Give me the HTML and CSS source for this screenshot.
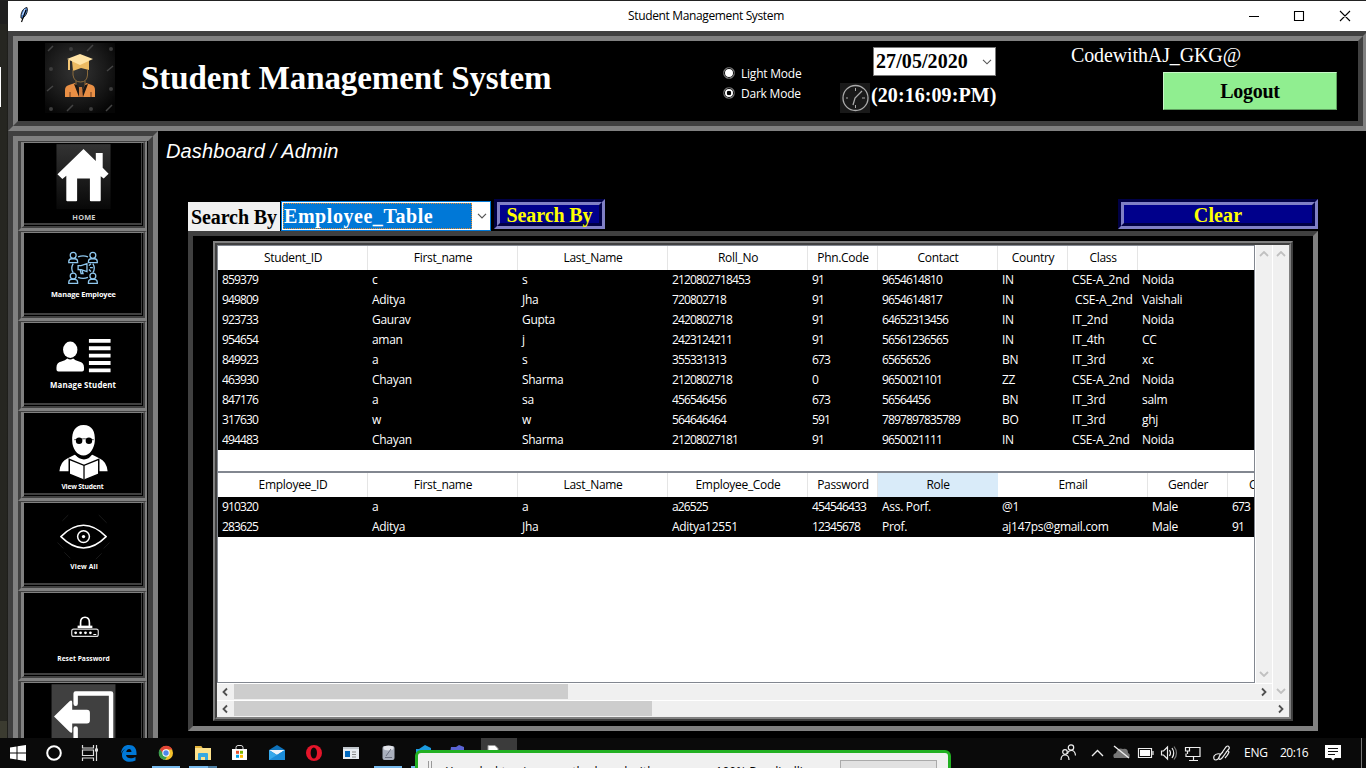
FILE: index.html
```html
<!DOCTYPE html>
<html lang="en">
<head>
<meta charset="utf-8">
<title>Student Management System</title>
<link rel="stylesheet" href="styles.css">
</head>
<body>
<div class="screen">
  <div class="upper">
    <div class="desktop"><i class="chip"></i><i class="patch"></i></div>
    <div class="window">
      <div class="titlebar">
        <svg class="feather" width="12" height="18" viewBox="0 0 12 18"><path d="M2 12C1.500 7 4 2 8 1.500c1 3 0 7.500-4.500 11z" fill="#4a86d8" stroke="#222" stroke-width="1"/><path d="M7 4 2.500 16" stroke="#000" stroke-width="1.200"/><path d="M6 3 3.500 9" stroke="#cfe2ff" stroke-width="1"/></svg>
        <span class="caption">Student Management System</span>
        <svg class="winbtns" width="102" height="12" viewBox="0 0 102 12" fill="none" stroke="#000" stroke-width="1.1"><path d="M0 6.5h10M45.500 1.500h9v9h-9zM91 1l10 10M101 1 91 11"/></svg>
      </div>
      <div class="relief header"><div class="relief-in header-in">
        <svg class="logo" width="70" height="70" viewBox="0 0 70 70"><defs><radialGradient id="lg" cx=".45" cy=".4" r=".7"><stop offset="0" stop-color="#343434"/><stop offset=".6" stop-color="#191919"/><stop offset="1" stop-color="#050505"/></radialGradient></defs><rect width="70" height="70" fill="url(#lg)"/><g stroke="#444" stroke-width="1.500"><path d="m3 8 5-5M42 8l6-6M62 28l6-5M2 48l6-5M22 68l6-6M61 68l6-6"/></g><g fill="#3c3c3c"><circle cx="26" cy="6" r="2"/><circle cx="66" cy="6" r="2"/><circle cx="6" cy="26" r="2"/><circle cx="66" cy="46" r="2"/><circle cx="6" cy="66" r="2"/><circle cx="46" cy="66" r="2"/></g><path d="M27 18h17v9l-8-2-8 3z" fill="#ecba62"/><path d="m22 16 13-5 13 5-13 6z" fill="#ffe3a5"/><path d="M24 17v10" stroke="#f4c675" stroke-width="2"/><path d="M28 27v5q1 7 7.500 7t7-7v-5M31 38v5M40 38v5" fill="none" stroke="#8a6a3c" stroke-width="1"/><path d="M20 54v-7q0-4 4-5l6-2 5 12 6-12 6 2q3 1 3 5v7z" fill="#e98f45"/><path d="m29 41 5 13h4l5-13-3 1-4 8-4-8z" fill="#1b1614"/><path d="M34 44h3l1 10h-4z" fill="#c8783d"/><path d="M25 54v-5M46 54v-5" stroke="#683a20"/></svg>
        <h1>Student Management System</h1>
        <div class="modes">
          <label><i class="radio"></i>Light Mode</label>
          <label><i class="radio on"></i>Dark Mode</label>
        </div>
        <div class="datetime">
          <div class="date"><span>27/05/2020</span><svg width="10" height="6" viewBox="0 0 10 6" fill="none" stroke="#555" stroke-width="1.1"><path d="m1 .8 4 4 4-4"/></svg></div>
          <div class="clock"><svg width="30" height="30" viewBox="0 0 30 30"><rect width="30" height="30" fill="#191919"/><g fill="none" stroke="#aaa"><circle cx="15.500" cy="15" r="12.500" stroke-width="1.300"/><path d="M15.500 5v3M15.500 22v3M6 15h2M22 15h3"/><path d="M22 8 15 15l-2 7" stroke-width="1.300"/></g></svg><span>(20:16:09:PM)</span></div>
        </div>
        <div class="account"><span class="user">CodewithAJ_GKG@</span><div class="logout">Logout</div></div>
      </div></div>
      <div class="content">
        <div class="relief sidebar"><div class="relief-in">
          <div class="nav"><div class="nav-in"><svg width="121" height="83" viewBox="0 0 121 83"><defs><linearGradient id="hg" x2="0" y2="1"><stop stop-color="#333"/><stop offset="1" stop-color="#080808"/></linearGradient></defs><rect x="32" y="1" width="55" height="66" fill="url(#hg)"/><path d="M59.500 6 72 18V10h7v15l6 6-5 5-3-2.500V58q0 1-1 1H67q-1 0-1-1V36H53v22q0 1-1 1h-9q-1 0-1-1V33l-4 3.500-5-5z" fill="#fff"/><text x="60" y="78" class="nt home">HOME</text></svg></div></div>
          <div class="nav"><div class="nav-in"><svg width="121" height="83" viewBox="0 0 121 83"><g fill="none" stroke="#8fc8ef" stroke-width="1.300"><g id="p"><circle cx="49" cy="22.500" r="3"/><path d="M44.500 30v-1q0-3 3-3h3q3 0 3 3v1z"/></g><use href="#p" x="20"/><use href="#p" y="21"/><use href="#p" x="20" y="21"/><path d="M54 24q5-2 10 0M54 45q5 2 10 0M49 31q-3 5 0 9M69 31q3 5 0 9M54 33h3l6-2v8l-6-2h-3zM56 37l1 4h2l-1-3M65 33l2-2M66 35h3M65 37l2 2"/></g><text x="59.500" y="64.500" class="nt" textLength="66">Manage Employee</text></svg></div></div>
          <div class="nav"><div class="nav-in"><svg width="121" height="83" viewBox="0 0 121 83"><g fill="#fff"><ellipse cx="46" cy="27" rx="7.300" ry="8.300"/><path d="M32 45q0-5 5-6 4-1 6-3 3 2 6 0 2 2 6 3 5 1 5 6v2q0 2-2 2H34q-2 0-2-2zM65 16h22v4H65zM65 23.500h22v4H65zM65 31h22v4H65zM65 38.500h22v4H65zM65 46h22v4H65z"/></g><text x="59" y="65.500" class="nt big" textLength="67">Manage Student</text></svg></div></div>
          <div class="nav"><div class="nav-in"><svg width="121" height="83" viewBox="0 0 121 83"><g fill="#fff"><path d="M59.500 12c9 0 12 7 11.500 16-.5 8-5 15-11.500 15S48 36 48 28c-.5-9 3-16 11.500-16z"/><path d="M35 59q1-10 8-13l8-4q4 5 9 5t8-5l8 4q7 3 8 13z"/></g><path d="M48 38q4 7 11.500 7T71 38" fill="none" stroke="#000" stroke-width="1.200"/><path d="M45 47v15l15 6 15-6V47l-15 6z" fill="#fff" stroke="#000" stroke-width="1.500"/><path d="M60 53v14" stroke="#000" stroke-width="1.300"/><circle cx="55" cy="28" r="3.300"/><circle cx="65" cy="28" r="3.300"/><path d="M50 27q10-2 20 0" fill="none" stroke="#000" stroke-width=".7"/><text x="58.500" y="77" class="nt small" textLength="43">View Student</text></svg></div></div>
          <div class="nav"><div class="nav-in"><svg width="121" height="83" viewBox="0 0 121 83"><g stroke="#1a1a1a"><path d="m38 18 6-6M75 12l8 8M33 40l6 6M80 46l6-6M40 50l6 6M72 57l6-6"/></g><g fill="none" stroke="#fff" stroke-width="1.500"><path d="M36.500 34q23-23 46 0-23 23-46 0z"/><circle cx="59.500" cy="34" r="6"/></g><circle cx="59.500" cy="34" r="1.700" fill="#fff"/><text x="60" y="66.500" class="nt small" textLength="28">View All</text></svg></div></div>
          <div class="nav"><div class="nav-in"><svg width="121" height="83" viewBox="0 0 121 83"><path d="M56.500 34v-4q0-5.500 4.500-5.500t4.500 5.500v4" fill="none" stroke="#fff" stroke-width="1.700"/><path d="M53.500 33h15v2.500h-15z" fill="#fff"/><rect x="47.500" y="36.500" width="27" height="7.500" rx="2" fill="none" stroke="#ddd" stroke-width="1.200"/><g fill="#fff"><circle cx="51.500" cy="40.300" r="1.400"/><circle cx="56.500" cy="40.300" r="1.400"/><circle cx="61.500" cy="40.300" r="1.400"/><circle cx="66.500" cy="40.300" r="1.400"/><path d="M69.500 41.500h3v1h-3z"/></g><text x="59.500" y="68.500" class="nt small" textLength="53.500">Reset Password</text></svg></div></div>
          <div class="nav"><div class="nav-in"><svg width="121" height="83" viewBox="0 0 121 83"><path d="M27 1h65v80H27z" fill="#404040"/><path d="M51.500 21V10.500h36V64h-36V46" fill="none" stroke="#fff" stroke-width="4.500" stroke-linecap="round" stroke-linejoin="round"/><path d="M29.500 34 45 18.500q3-2 3 1V27h15q3 0 3 3v8q0 3-3 3H48v8q0 3-3 0z" fill="#fff"/></svg></div></div>
        </div></div>
        <div class="main">
          <h2>Dashboard / Admin</h2>
          <div class="tools">
            <span class="lbl">Search By</span>
            <div class="combo"><span class="sel">Employee_Table</span><svg width="10" height="6" viewBox="0 0 10 6" fill="none" stroke="#555" stroke-width="1.200"><path d="m1 .8 4 4 4-4"/></svg></div>
            <div class="btn search"><div>Search By</div></div>
            <div class="btn clear"><div>Clear</div></div>
          </div>
          <div class="frame"><div class="ridge"><div class="ridge-in">
            <div class="trees">
              <div class="tree t1"><table><colgroup><col class="w150"><col class="w150"><col class="w150"><col class="w140"><col class="w70"><col class="w120"><col class="w70"><col class="w70"><col class="w150"></colgroup>
                <tr><th>Student_ID</th><th>First_name</th><th>Last_Name</th><th>Roll_No</th><th>Phn.Code</th><th>Contact</th><th>Country</th><th>Class</th><th></th></tr>
                <tr><td>859379</td><td>c</td><td>s</td><td>2120802718453</td><td>91</td><td>9654614810</td><td>IN</td><td>CSE-A_2nd</td><td>Noida</td></tr>
                <tr><td>949809</td><td>Aditya</td><td>Jha</td><td>720802718</td><td>91</td><td>9654614817</td><td>IN</td><td>&nbsp;CSE-A_2nd</td><td>Vaishali</td></tr>
                <tr><td>923733</td><td>Gaurav</td><td>Gupta</td><td>2420802718</td><td>91</td><td>64652313456</td><td>IN</td><td>IT_2nd</td><td>Noida</td></tr>
                <tr><td>954654</td><td>aman</td><td>j</td><td>2423124211</td><td>91</td><td>56561236565</td><td>IN</td><td>IT_4th</td><td>CC</td></tr>
                <tr><td>849923</td><td>a</td><td>s</td><td>355331313</td><td>673</td><td>65656526</td><td>BN</td><td>IT_3rd</td><td>xc</td></tr>
                <tr><td>463930</td><td>Chayan</td><td>Sharma</td><td>2120802718</td><td>0</td><td>9650021101</td><td>ZZ</td><td>CSE-A_2nd</td><td>Noida</td></tr>
                <tr><td>847176</td><td>a</td><td>sa</td><td>456546456</td><td>673</td><td>56564456</td><td>BN</td><td>IT_3rd</td><td>salm</td></tr>
                <tr><td>317630</td><td>w</td><td>w</td><td>564646464</td><td>591</td><td>7897897835789</td><td>BO</td><td>IT_3rd</td><td>ghj</td></tr>
                <tr><td>494483</td><td>Chayan</td><td>Sharma</td><td>21208027181</td><td>91</td><td>9650021111</td><td>IN</td><td>CSE-A_2nd</td><td>Noida</td></tr>
              </table></div>
              <div class="tree t2"><table><colgroup><col class="w150"><col class="w150"><col class="w150"><col class="w140"><col class="w70"><col class="w120"><col class="w150"><col class="w80"><col class="w70"></colgroup>
                <tr><th>Employee_ID</th><th>First_name</th><th>Last_Name</th><th>Employee_Code</th><th>Password</th><th class="hot">Role</th><th>Email</th><th>Gender</th><th class="last">C</th></tr>
                <tr><td>910320</td><td>a</td><td>a</td><td class="num">a26525</td><td>454546433</td><td>Ass. Porf.</td><td>@1</td><td>Male</td><td>673</td></tr>
                <tr><td>283625</td><td>Aditya</td><td>Jha</td><td>Aditya12551</td><td>12345678</td><td>Prof.</td><td>aj147ps@gmail.com</td><td>Male</td><td>91</td></tr>
              </table></div>
            </div>
            <div class="vs v1"><svg class="a" viewBox="0 0 10 6"><path d="m1 5 4-4 4 4"/></svg><svg class="a" viewBox="0 0 10 6"><path d="m1 1 4 4 4-4"/></svg></div>
            <div class="vs v2"><svg class="a" viewBox="0 0 10 6"><path d="m1 5 4-4 4 4"/></svg><svg class="a" viewBox="0 0 10 6"><path d="m1 1 4 4 4-4"/></svg></div>
            <div class="hs h1"><svg class="b" viewBox="0 0 6 10"><path d="M5 1.500 1.500 5 5 8.500"/></svg><i class="thumb one"></i><svg class="b end" viewBox="0 0 6 10"><path d="M1 1.500 4.500 5 1 8.500"/></svg></div>
            <div class="hs h2"><svg class="b" viewBox="0 0 6 10"><path d="M5 1.500 1.500 5 5 8.500"/></svg><i class="thumb two"></i><svg class="b end" viewBox="0 0 6 10"><path d="M1 1.500 4.500 5 1 8.500"/></svg></div>
          </div></div></div>
        </div>
      </div>
    </div>
  </div>
  <div class="taskbar">
    <svg class="apps" width="520" height="30" viewBox="0 0 520 30">
      <path d="M10 9.500 16.500 8.500v6H10zM17.500 8.300 26 7v7.500h-8.500zM10 15.500h6.500v6L10 20.500zM17.500 15.500H26V23l-8.500-1.300z" fill="#fff"/>
      <circle cx="54" cy="15" r="6.800" fill="none" stroke="#fff" stroke-width="2"/>
      <g stroke="#ddd" stroke-width="1.200" fill="none"><path d="M82.500 7v3h11V7M82.500 23v-3h11v3M82.500 12h11v5.500h-11zM96.500 7v16"/><path d="M96.500 10.500v3" stroke-width="3"/></g>
      <path d="M121 15.500c.5-6 3.500-8.500 8-8.500 5 0 7.500 3.500 7.500 8v2H126c.5 4 6 4 9.500 2v3.500c-6 3-14 1-13.500-6 .2-4 3-5.500 5-6q-4 .3-6 5zM126.300 14h5.200c0-4.200-4.800-3.700-5.200 0z" fill="#0078d7"/>
      <g><circle cx="166" cy="15" r="7" fill="#f5c22c"/><path d="M166 15l-6-4a7 7 0 0 0 5 11l3-5z" fill="#3a9e50"/><path d="M160 11.500a7 7 0 0 1 12.500 0H166l-3 4z" fill="#e24436"/><circle cx="166" cy="15" r="3.700" fill="#fff"/><circle cx="166" cy="15" r="2.700" fill="#4c87ea"/></g>
      <path d="M195 8h6l1.500 2H211v12h-16z" fill="#fde28c"/><path d="M195 8h6l1.500 2H195z" fill="#e3b43d"/><path d="M198 22v-6q0-1 1-1h8q1 0 1 1v6h-3v-3h-4v3z" fill="#36a8e0"/>
      <path d="M236 11v-1.500q0-2 2-2h3q2 0 2 2V11" fill="none" stroke="#ddd"/><path d="M232 11h15v10.500q0 .5-.5.500h-14q-.5 0-.5-.5z" fill="#fff"/><path d="M236 12.800h3v3h-3z" fill="#e94f2b"/><path d="M240 12.800h3v3h-3z" fill="#7db700"/><path d="M236 16.800h3v3h-3z" fill="#00a1ea"/><path d="M240 16.800h3v3h-3z" fill="#fdb900"/>
      <path d="m269 12 8-5 8 5v10h-16z" fill="#0e71b9"/><path d="M269 12h16l-8 5z" fill="#eef4fb"/><path d="m269 12 8 5 8-5v10h-16z" fill="#36a9ec"/><path d="m269 22 16-10v10z" fill="#1b8cd9"/>
      <ellipse cx="314" cy="15" rx="8" ry="8" fill="#e4152a"/><ellipse cx="313.800" cy="15" rx="3.200" ry="5.500" fill="#090909"/>
      <path d="M343 9h16v12h-16z" fill="#e8edf2"/><path d="M343 9h16v2h-16z" fill="#bfc5cb"/><path d="M345 13h5v6h-5z" fill="#0069c0"/><path d="M352 14h4M352 16.500h4M352 19h4" stroke="#888"/>
      <rect x="382.500" y="8" width="12" height="14" rx="2" fill="#aab0bd"/><ellipse cx="388.500" cy="10" rx="5" ry="2.500" fill="#e2e4ea"/><path d="m386 18 5-7M385 19.500h7" stroke="#6b7080"/>
      <path d="M416 11h3l6-4 6 3v6h-15z" fill="#1b9be0"/><path d="M451 9h5l3-2 5 2v6h-14z" fill="#5b64d4"/>
      <path d="M481 0h36v30h-36z" fill="#3b3b3b"/><path d="M488 7.500h7l3 3v9h-10z" fill="#fff" stroke="#999"/>
      <g fill="#76b9ed"><path d="M152 28h28v2h-28zM189 28h19v2h-19zM374 28h28v2h-28zM411 28h20v2h-20z"/><path d="M208 28h9v2h-9z" fill="#4d7ea3"/></g>
    </svg>
    <div class="tray">
      <svg width="176" height="30" viewBox="0 0 176 30" fill="none" stroke="#eee" stroke-width="1.200">
        <circle cx="6" cy="14" r="2.300"/><circle cx="12" cy="9.500" r="2.700"/><path d="M2 22q0-5 4-5t4 5M8.500 16q.5-3.500 4-3.500 3.500 0 4 5"/>
        <path d="m33 18 5.500-5.500L44 18" stroke-width="1.400"/>
        <path d="M55 20q-2-4 2-5 2-6 7-4 5-1 5 4 3 1 1 5z" fill="#777" stroke="none"/><path d="m55 8 15 12" stroke-width="1.400"/>
        <path d="M79.500 10.500h13v9h-13zM94 13v4"/><path d="M81 12h10v6h-10z" fill="#fff" stroke="none"/>
        <path d="M102.500 13v4h2l4 4V9l-4 4zM110.500 12q2 3 0 6M113 10q3.500 5 0 10"/><path d="M115 8.500q5 6.500 0 13" stroke="#777"/>
        <path d="M130 9.500h11v9h-14v-3M134.500 19v3M130 22.500h9M126.500 9.500h4v3.500h-4zM128.500 13v3"/>
        <path d="M161 17.500 167 9q2-2 3 0 1 1-1 3l-6 8q-3 3-3 0 0-3 4-6M167 14q2-2 3 0-1 3-4 6M161 16q-4-1-6 2-1 4 2 4 3-1 3-3"/>
      </svg>
      <span class="eng">ENG</span><span class="time">20:16</span>
      <svg class="note" width="16" height="16" viewBox="0 0 16 16"><path d="M0 0h16v13h-6l-2 2.500L6 13H0z" fill="#fff"/><path d="M3 3.500h10M3 6.500h10M3 9.500h7" stroke="#111"/></svg>
    </div>
    <i class="peek"></i>
    <div class="toast"><i class="grip"></i><span class="msg">Your desktop is currently shared with everyone. 100% Bandizelli</span><i class="tbtn"></i></div>
  </div>
</div>
</body>
</html>
```
FILE: styles.css
```css
* { box-sizing: border-box; }
body { margin: 0; background: #000; font: 12px/20px "Open Sans", "Noto Sans", sans-serif; letter-spacing: -0.3px; color: #fff; }
svg { display: block; flex: none; }
.screen { width: 1366px; height: 768px; overflow: hidden; display: flex; flex-direction: column; }
.upper { height: 738px; display: flex; overflow: hidden; border-top: 1px solid #222; flex: none; }
.desktop { width: 8px; flex: none; background: linear-gradient(90deg, #262621 80%, #1b1b18); display: flex; flex-direction: column; border-top: 23px solid #202020; }
.chip { width: 1px; height: 40px; margin-top: 43px; background: #fff; }
.patch { width: 7px; height: 17px; margin-top: auto; background: #3b3b30; }
.window { width: 1360px; flex: none; background: #000; }

.titlebar { height: 30px; background: #fff; color: #000; display: flex; align-items: center; }
.feather { margin-left: 11px; margin-top: -2px; }
.caption { width: 166px; margin-left: 592px; text-align: center; white-space: nowrap; letter-spacing: -0.36px; }
.winbtns { margin-left: 460px; margin-top: -1px; }

.relief { border: 5px solid; border-color: #404040 #808080 #808080 #404040; }
.relief-in { border: 5px solid; border-color: #808080 #404040 #404040 #808080; height: 100%; }
.header { height: 100px; }
.header-in { display: flex; align-items: flex-start; }
.logo { margin: 2px 0 0 27px; }
h1 { width: 560px; margin: 17px 0 0 26px; font: bold 33px/40px "Liberation Serif", serif; letter-spacing: -0.08px; white-space: nowrap; }
.modes { width: 117px; margin: 23px 0 0 22px; letter-spacing: -0.22px; }
.modes label { display: flex; align-items: center; height: 20px; }
.radio { width: 12px; height: 12px; border-radius: 50%; background: #fff; border: 1px solid #555; box-shadow: inset 0 0 0 1px #000; margin-right: 6px; margin-top: -2px; }
.radio.on { background: radial-gradient(circle, #000 2px, #fff 2.600px); }
.datetime { width: 158px; padding-top: 6px; font: bold 20px/29px "Liberation Serif", serif; letter-spacing: 0.08px; }
.date { width: 123px; height: 29px; margin-left: 33px; padding: 0 3px 0 2px; border: 1px solid #7a7a7a; background: #fff; color: #000; display: flex; align-items: center; justify-content: space-between; }
.clock { display: flex; margin-top: 7px; white-space: nowrap; }
.clock span { margin: -2px 0 0 1px; }
.account { margin-left: 73px; font: 20px/28px "Liberation Serif", serif; letter-spacing: -0.12px; }
.user { display: block; height: 31px; }
.logout { width: 174px; height: 38px; margin-left: 92px; background: #90ee90; color: #000; border: 1px solid; border-color: #c8f7c8 #5f9f5f #5f9f5f #c8f7c8; text-align: center; font-weight: bold; line-height: 36px; letter-spacing: -0.3px; }

.content { display: flex; height: 607px; }
.sidebar { width: 150px; height: 660px; flex: none; }
.nav { width: 129px; height: 90px; border: solid; border-width: 1px 2px 3px 3px; border-color: #404040 #808080 #808080 #404040; }
.nav-in { height: 86px; border: solid; border-width: 1px 2px 2px 3px; border-color: #808080 #404040 #404040 #808080; box-shadow: inset -1px -1px #000, inset -2px -3px #404040; overflow: hidden; }
.nav-in svg { width: 119px; height: 82px; overflow: visible; margin-left: 1px; }
.nt { font: bold 7.500px "Open Sans", sans-serif; fill: #fff; text-anchor: middle; letter-spacing: 0; }
.nt.home { fill: #ccc; letter-spacing: 0.2px; }
.nt.big { font-size: 8px; }
.nt.small { font-size: 6.800px; }

.main { flex: 1; padding: 6px 0 0 30px; }
h2 { margin: 0 0 0 -22px; height: 62px; font: italic 20px/28px "Liberation Sans", sans-serif; letter-spacing: 0.12px; }
.tools { display: flex; height: 32px; width: 1130px; color: #000; font: bold 20px/28px "Liberation Serif", serif; letter-spacing: -0.1px; white-space: nowrap; }
.lbl { width: 92px; height: 29px; margin: 3px 1px 0 0; padding-left: 3px; background: #f0f0f0; line-height: 30px; }
.combo { width: 210px; height: 30px; margin-top: 2px; border: 1px solid #0078d7; background: #fff; padding: 1px 3px 1px 1px; display: flex; justify-content: space-between; align-items: center; }
.sel { width: 189px; height: 26px; background: #0078d7; outline: 1px dotted #e08a30; outline-offset: -1px; color: #fff; line-height: 26px; padding-left: 1px; letter-spacing: 0.55px; }
.btn { height: 30px; border: 3px solid; border-color: #000045 #8080c5 #8080c5 #000045; color: #ff0; text-align: center; }
.btn div { height: 24px; border: 3px solid; border-color: #8080c5 #000045 #000045 #8080c5; background: #00008b; line-height: 20px; }
.search { width: 111px; margin-left: 3px; }
.clear { width: 200px; margin-left: auto; letter-spacing: 0.1px; }

.frame { width: 1130px; height: 500px; border: 5px solid; border-color: #404040 #808080 #808080 #404040; padding: 5px 20px; }
.ridge { width: 1080px; height: 480px; border: 2px solid; border-color: #808080 #404040 #404040 #808080; }
.ridge-in { width: 1076px; height: 476px; border: 2px solid; border-color: #404040 #808080 #808080 #404040; background: #f0f0f0; display: grid; grid-template: 438px 17px 17px / 1038px 17px 17px; }
.trees { grid-area: 1 / 1; color: #000; }
.tree { border: 1px solid #828790; background: #fff; overflow: hidden; }
.t1 { height: 227px; }
.t2 { height: 211px; }
table { border-collapse: collapse; table-layout: fixed; width: 1070px; }
.t2 table { width: 1080px; }
th, td { padding: 0 0 0 4px; white-space: nowrap; overflow: hidden; }
th { height: 24px; font-weight: normal; text-align: center; background: #fff; box-shadow: inset -1px 0 #e5e5e5; padding: 0; }
th.hot { background: #d9ebf9; box-shadow: -1px 0 #d9ebf9; }
th.last { text-align: left; padding-left: 21px; box-shadow: none; }
td { height: 20px; background: #000; color: #fff; }
.t1 td:nth-child(1), .t1 td:nth-child(4), .t1 td:nth-child(5), .t1 td:nth-child(6),
.t2 td:nth-child(1), .t2 td:nth-child(5), .t2 td:nth-child(9), td.num { letter-spacing: -0.86px; }
.t1 td:nth-child(8) { letter-spacing: -0.15px; }
.w150 { width: 150px; } .w140 { width: 140px; } .w120 { width: 120px; } .w80 { width: 80px; } .w70 { width: 70px; }

.vs { display: flex; flex-direction: column; justify-content: space-between; align-items: center; padding: 6px 1px 6px 0; border-left: 1px solid #fff; }
.v1 { grid-area: 1 / 2; }
.v2 { grid-area: 1 / 3 / 3 / 4; }
.a, .b { fill: none; stroke: #c0c0c0; stroke-width: 1.800; }
.a { width: 10px; height: 6px; }
.hs { display: flex; align-items: center; border-top: 1px solid #fff; padding: 0 5px 1px 5px; }
.h1 { grid-area: 2 / 1 / 3 / 3; }
.h2 { grid-area: 3 / 1 / 4 / 4; }
.b { width: 6px; height: 10px; stroke: #505050; }
.thumb { height: 15px; margin-left: 6px; background: #cdcdcd; }
.one { width: 334px; }
.two { width: 418px; }
.end { margin-left: auto; }

.taskbar { height: 30px; background: #0a0a0a; display: flex; position: relative; flex: none; }
.tray { display: flex; align-items: center; margin-left: 539px; letter-spacing: -0.2px; }
.eng { width: 36px; margin-left: 9px; }
.time { width: 45px; letter-spacing: -0.5px; }
.peek { width: 1px; background: #777; margin-left: auto; margin-right: 4px; }
.toast { position: absolute; left: 415px; top: 12px; width: 536px; height: 40px; border: 3px solid #22b022; border-radius: 6px; background: #f0f0f0; color: #000; overflow: hidden; display: flex; }
.grip { width: 4px; height: 30px; margin: 8px 0 0 10px; border: solid #999; border-width: 0 1px; }
.msg { margin: 9px 0 0 14px; width: 395px; font-size: 12px; white-space: nowrap; letter-spacing: 0; }
.tbtn { width: 97px; height: 24px; margin-top: 7px; margin-left: -1px; border: 1px solid #aaa; background: #e1e1e1; }
```
